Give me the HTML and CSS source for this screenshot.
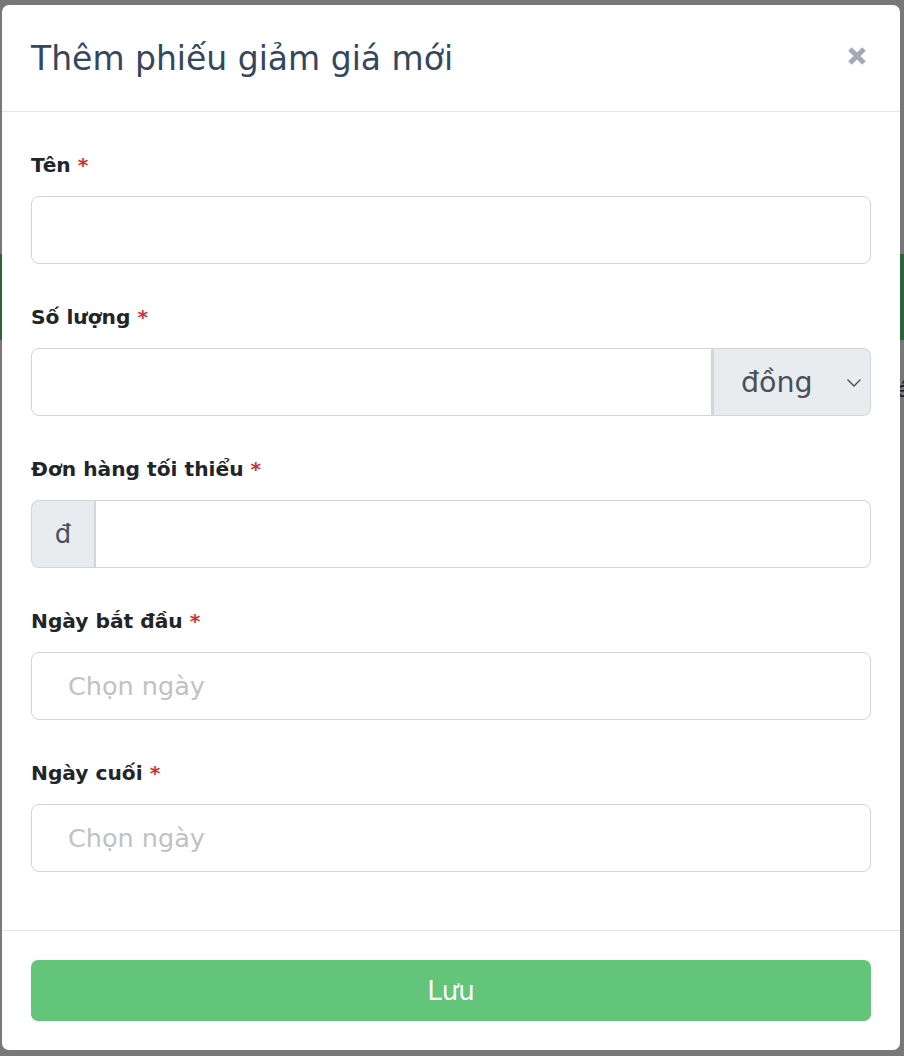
FILE: index.html
```html
<!DOCTYPE html>
<html lang="vi">
<head>
<meta charset="utf-8">
<link rel="stylesheet" href="styles.css">
</head>
<body>
<div class="page">
  <div class="page-bar"></div>
  <div class="page-row">é</div>
</div>
<div class="overlay">
  <div class="modal">
    <div class="modal-header">
      <h1 class="modal-title">Thêm phiếu giảm giá mới</h1>
      <button class="close" aria-label="Đóng">
        <svg width="20" height="20" viewBox="0 0 20 20"><path d="M3 3 L17 17 M17 3 L3 17" stroke="#a3a9b7" stroke-width="5" fill="none"/></svg>
      </button>
    </div>
    <div class="modal-body">
      <div class="field">
        <label class="label">Tên <span class="req">*</span></label>
        <div class="input"></div>
      </div>
      <div class="field">
        <label class="label">Số lượng <span class="req">*</span></label>
        <div class="group">
          <div class="input grow left"></div>
          <div class="select">đồng
            <svg class="chev" width="16" height="10" viewBox="0 0 16 10"><path d="M1.5 1.5 L8 8 L14.5 1.5" stroke="#495057" stroke-width="1.4" fill="none"/></svg>
          </div>
        </div>
      </div>
      <div class="field">
        <label class="label">Đơn hàng tối thiểu <span class="req">*</span></label>
        <div class="group">
          <div class="prefix">đ</div>
          <div class="input grow right"></div>
        </div>
      </div>
      <div class="field">
        <label class="label">Ngày bắt đầu <span class="req">*</span></label>
        <div class="input"><span class="ph">Chọn ngày</span></div>
      </div>
      <div class="field last">
        <label class="label">Ngày cuối <span class="req">*</span></label>
        <div class="input"><span class="ph">Chọn ngày</span></div>
      </div>
    </div>
    <div class="modal-footer">
      <button class="save">Lưu</button>
    </div>
  </div>
</div>
</body>
</html>
```
FILE: styles.css
```css
html, body {
  margin: 0;
  padding: 0;
}
body {
  width: 904px;
  height: 1056px;
  overflow: hidden;
  font-family: "DejaVu Sans", Inter, sans-serif;
  background: #ffffff;
  position: relative;
}
.page {
  padding-top: 254px;
}
.page-bar {
  height: 86px;
  background: #5bd37e;
}
.page-row {
  height: 60px;
  line-height: 100px;
  padding-left: 896px;
  font-size: 22px;
  color: #2b3a55;
  white-space: nowrap;
}
.overlay {
  position: absolute;
  inset: 0;
  background: rgba(0, 0, 0, 0.53);
  padding: 5px 4px 0 2px;
}
.modal {
  width: 898px;
  height: 1045px;
  background: #fff;
  border-radius: 7px;
  display: flex;
  flex-direction: column;
  overflow: hidden;
}
.modal-header {
  height: 106px;
  border-bottom: 1px solid #e3e6ec;
  display: flex;
  align-items: center;
  justify-content: space-between;
  padding: 0 33px 0 29px;
}
.modal-title {
  margin: 0;
  font-size: 33px;
  font-weight: 400;
  color: #34475f;
  margin-top: 1px;
}
.close {
  border: 0;
  background: none;
  padding: 0;
  width: 20px;
  height: 20px;
  display: flex;
  margin-top: -4px;
}
.modal-body {
  padding: 41px 29px 0;
  flex: 1;
}
.field {
  margin-bottom: 41px;
}
.label {
  display: block;
  font-size: 20.2px;
  font-weight: 700;
  line-height: 24px;
  color: #212529;
  margin-bottom: 19px;
}
.req {
  color: #d0313a;
}
.input {
  height: 66px;
  border: 1px solid #d2d5da;
  border-radius: 8px;
  box-sizing: content-box;
  display: flex;
  align-items: center;
  padding-left: 36px;
}
.group {
  display: flex;
}
.grow {
  flex: 1;
}
.input.left {
  border-radius: 8px 0 0 8px;
}
.input.right {
  border-radius: 0 8px 8px 0;
  border-left: 0;
}
.select {
  width: 129px;
  height: 66px;
  padding-left: 29px;
  border: 1px solid #d2d5da;
  border-left: 0;
  border-radius: 0 8px 8px 0;
  background: #e9ecef;
  display: flex;
  align-items: center;
  font-size: 28.5px;
  color: #495057;
  position: relative;
}
.select::before {
  content: "";
  position: absolute;
  left: 0;
  top: 0;
  bottom: 0;
  width: 2px;
  background: #d2d5da;
}
.chev {
  position: absolute;
  right: 8px;
  top: 29px;
}
.prefix {
  width: 62px;
  height: 66px;
  border: 1px solid #d2d5da;
  border-right: 2px solid #d2d5da;
  border-radius: 8px 0 0 8px;
  background: #e9ecef;
  display: flex;
  align-items: center;
  justify-content: center;
  font-size: 26px;
  color: #495057;
}
.ph {
  font-size: 25.5px;
  color: #bfc1c4;
}
.modal-footer {
  border-top: 1px solid #e3e6ec;
  padding: 29px 29px 29px;
}
.save {
  width: 100%;
  height: 61px;
  border: 0;
  border-radius: 7px;
  background: #62c57a;
  color: #fff;
  font-family: inherit;
  font-size: 26px;
  font-weight: 400;
}
```
